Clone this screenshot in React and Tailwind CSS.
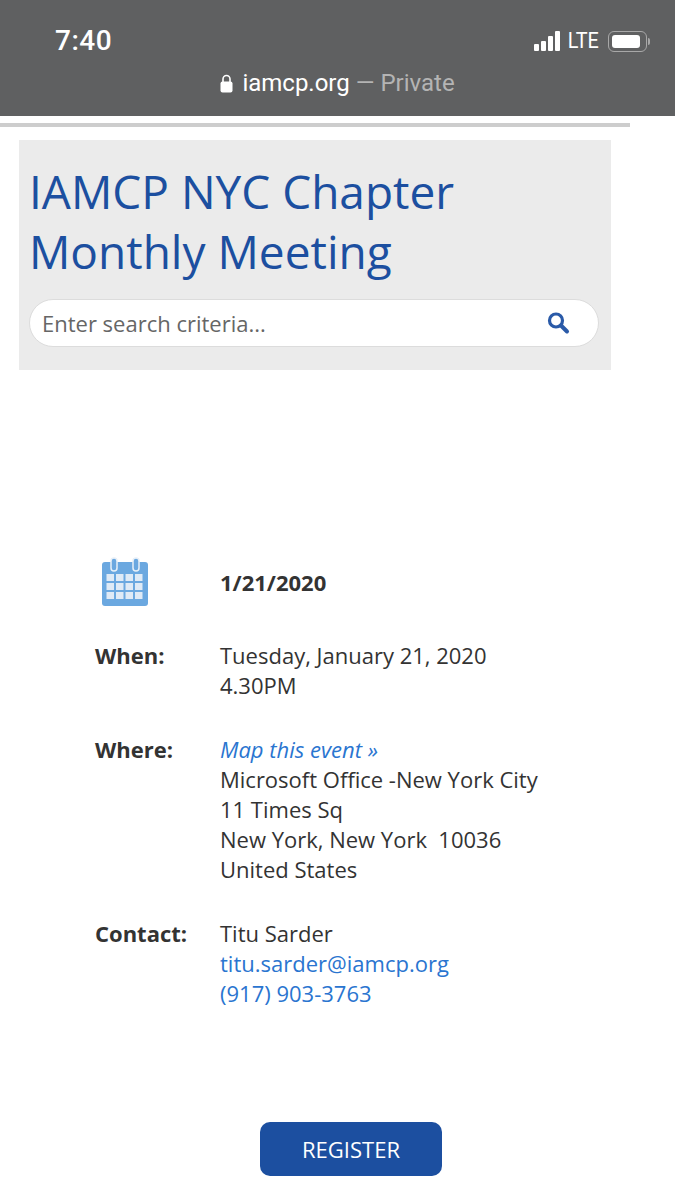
import { Fragment } from 'react';

const openSans = 'font-["Open_Sans",sans-serif]';

function CalendarIcon() {
  const cells = [];
  for (let row = 0; row < 3; row++) {
    for (let col = 0; col < 4; col++) {
      cells.push(<rect key={`${row}-${col}`} x={4.5 + col * 9.5} y={17 + row * 9} width="7.5" height="7" fill="#dfeaf6" />);
    }
  }
  return (
    <svg width="46" height="50" viewBox="0 0 46 50">
      <rect x="0" y="5" width="46" height="44" rx="3" fill="#6ba8e0" />
      <rect x="9" y="1" width="6" height="13" rx="3" fill="#6ba8e0" stroke="#e8f0f8" strokeWidth="1.5" />
      <rect x="31" y="1" width="6" height="13" rx="3" fill="#6ba8e0" stroke="#e8f0f8" strokeWidth="1.5" />
      {cells}
    </svg>
  );
}

function StatusIcons() {
  return (
    <div className="flex items-center gap-[6px]">
      <div className="flex items-end gap-[2px]">
        <span className="w-[5px] h-[7px] rounded-[1px] bg-white" />
        <span className="w-[5px] h-[10px] rounded-[1px] bg-white" />
        <span className="w-[5px] h-[15px] rounded-[1px] bg-white" />
        <span className="w-[5px] h-[20px] rounded-[1px] bg-white" />
      </div>
      <span className="text-[22px] leading-none text-white scale-x-90 font-['Roboto',sans-serif]">LTE</span>
      <div className="flex items-center ml-[1px]">
        <div className="w-[39px] h-[21px] rounded-[6px] border border-[#a8a8a8] p-[3px]">
          <div className="w-[28px] h-full rounded-[3px] bg-white" />
        </div>
        <span className="w-[2px] h-[7px] ml-[1px] rounded-r-sm bg-[#a8a8a8]" />
      </div>
    </div>
  );
}

const rows = [
  {
    label: 'When:',
    lines: [{ text: 'Tuesday, January 21, 2020' }, { text: '4.30PM' }],
  },
  {
    label: 'Where:',
    lines: [
      { text: 'Map this event »', kind: 'map' },
      { text: 'Microsoft Office -New York City' },
      { text: '11 Times Sq' },
      { text: 'New York, New York\u00a0 10036' },
      { text: 'United States' },
    ],
  },
  {
    label: 'Contact:',
    lines: [
      { text: 'Titu Sarder' },
      { text: 'titu.sarder@iamcp.org', kind: 'link' },
      { text: '(917) 903-3763', kind: 'link' },
    ],
  },
];

export default function App() {
  return (
    <div className={`w-[675px] h-[1200px] overflow-hidden bg-white ${openSans}`}>
      <header className="h-[116px] bg-[#5f6061] px-[55px] pt-[24px]">
        <div className="flex items-center justify-between pr-[-1px] mr-[-30px]">
          <span className="text-[28px] leading-[34px] font-medium tracking-[0.5px] text-white font-['Roboto',sans-serif]">7:40</span>
          <StatusIcons />
        </div>
        <div className="mt-[9px] ml-[-55px] mr-[-55px] flex items-center justify-center gap-[9px] text-[24px] leading-[32px] font-['Roboto',sans-serif]">
          <svg width="13" height="19" viewBox="0 0 13 19">
            <path d="M3 8V5a3.5 3.5 0 0 1 7 0v3" fill="none" stroke="#fff" strokeWidth="1.6" />
            <rect x="0.5" y="7.5" width="12" height="11" rx="2" fill="#fff" />
          </svg>
          <span className="text-white">iamcp.org<span className="text-[#b4b4b4]"> — Private</span></span>
        </div>
      </header>

      <div className="mt-[7px] h-[4px] w-[630px] bg-[#cdcdcd]" />

      <section className="ml-[19px] mt-[13px] h-[230px] w-[592px] bg-[#ebebeb] pl-[10px] pt-[21px]">
        <h1 className="text-[46px] leading-[60px] text-[#1c4fa0]">
          IAMCP NYC Chapter
          <br />
          Monthly Meeting
        </h1>
        <div className="mt-[18px] flex h-[48px] w-[570px] items-center justify-between rounded-full border border-[#dcdcdc] bg-white pl-[12px] pr-[28px]">
          <span className="text-[22px] text-[#666]">Enter search criteria...</span>
          <svg width="24" height="24" viewBox="0 0 24 24" fill="none" stroke="#2a5aa8">
            <circle cx="10" cy="9.5" r="6.5" strokeWidth="3.2" />
            <path d="M15 14.5l6 6" strokeWidth="4" strokeLinecap="round" />
          </svg>
        </div>
      </section>

      <main className="mt-[187px] pl-[95px] text-[22px] leading-[30px] text-[#333]">
        <div className="grid grid-cols-[125px_1fr] items-center">
          <div className="pl-[7px]">
            <CalendarIcon />
          </div>
          <strong className="font-bold">1/21/2020</strong>
        </div>

        <div className="mt-[33px] grid grid-cols-[125px_1fr] gap-y-[34px]">
          {rows.map((row) => (
            <Fragment key={row.label}>
              <strong className="font-bold">{row.label}</strong>
              <div>
                {row.lines.map((line) => (
                  <div
                    key={line.text}
                    className={
                      line.kind === 'map'
                        ? 'italic text-[#2a75d0]'
                        : line.kind === 'link'
                          ? 'text-[#2a75d0]'
                          : ''
                    }
                  >
                    {line.text}
                  </div>
                ))}
              </div>
            </Fragment>
          ))}
        </div>

        <div className="mt-[114px] ml-[165px]">
          <button type="button" className="h-[54px] w-[182px] rounded-[10px] bg-[#1c4fa0] text-[22px] text-white">
            REGISTER
          </button>
        </div>
      </main>
    </div>
  );
}
